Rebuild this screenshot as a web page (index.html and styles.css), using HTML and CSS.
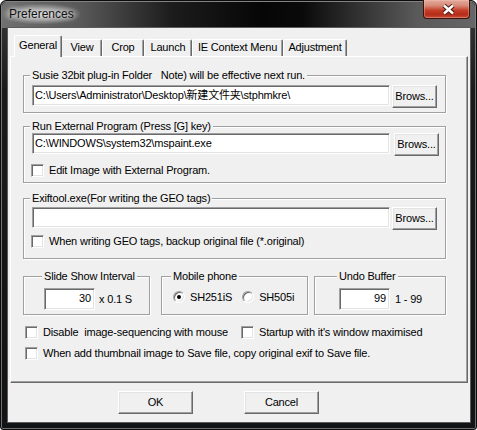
FILE: index.html
```html
<!DOCTYPE html>
<html>
<head>
<meta charset="utf-8">
<title>Preferences</title>
<link rel="stylesheet" href="styles.css">
</head>
<body>
<div class="window">
  <div class="titlebar">
    <span class="title">Preferences</span>
    <div class="close">
      <svg class="close-x" width="13" height="11" viewBox="0 0 13 11">
        <path d="M2 1.5 L11 9.5 M11 1.5 L2 9.5" stroke="#4a1510" stroke-width="4.4" fill="none"/>
        <path d="M2 1.5 L11 9.5 M11 1.5 L2 9.5" stroke="#ffffff" stroke-width="2.4" fill="none"/>
      </svg>
    </div>
  </div>
  <div class="client">
    <div class="tabs">
      <div class="tab sel w-general">General</div>
      <div class="tab w-view">View</div>
      <div class="tab w-crop">Crop</div>
      <div class="tab w-launch">Launch</div>
      <div class="tab w-ie">IE Context Menu</div>
      <div class="tab w-adj">Adjustment</div>
    </div>
    <div class="panel">
      <div class="group g1">
        <span class="group-title">Susie 32bit plug-in Folder   Note) will be effective next run.</span>
        <div class="field-row">
          <div class="edit path">C:\Users\Administrator\Desktop\新建文件夹\stphmkre\</div>
          <div class="btn browse">Brows...</div>
        </div>
      </div>
      <div class="group g2">
        <span class="group-title">Run External Program (Press [G] key)</span>
        <div class="field-row">
          <div class="edit path">C:\WINDOWS\system32\mspaint.exe</div>
          <div class="btn browse shift">Brows...</div>
        </div>
        <div class="check in-group"><span class="box"></span><span class="label">Edit Image with External Program.</span></div>
      </div>
      <div class="group g3">
        <span class="group-title">Exiftool.exe(For writing the GEO tags)</span>
        <div class="field-row">
          <div class="edit path"></div>
          <div class="btn browse">Brows...</div>
        </div>
        <div class="check in-group"><span class="box"></span><span class="label">When writing GEO tags, backup original file (*.original)</span></div>
      </div>
      <div class="group-row">
        <div class="group small slide">
          <span class="group-title">Slide Show Interval</span>
          <div class="small-row">
            <div class="edit num">30</div>
            <span class="unit">x 0.1 S</span>
          </div>
        </div>
        <div class="group small mobile">
          <span class="group-title">Mobile phone</span>
          <div class="small-row radios">
            <span class="radio on"></span><span class="label r1">SH251iS</span>
            <span class="radio"></span><span class="label">SH505i</span>
          </div>
        </div>
        <div class="group small undo">
          <span class="group-title">Undo Buffer</span>
          <div class="small-row">
            <div class="edit num">99</div>
            <span class="unit">1 - 99</span>
          </div>
        </div>
      </div>
      <div class="options">
        <div class="opt-row">
          <div class="check first"><span class="box"></span><span class="label">Disable  image-sequencing with mouse</span></div>
          <div class="check"><span class="box"></span><span class="label">Startup with it's window maximised</span></div>
        </div>
        <div class="opt-row second">
          <div class="check"><span class="box"></span><span class="label">When add thumbnail image to Save file, copy original exif to Save file.</span></div>
        </div>
      </div>
    </div>
    <div class="buttons">
      <div class="btn dlg">OK</div>
      <div class="btn dlg">Cancel</div>
    </div>
  </div>
</div>
</body>
</html>
```
FILE: styles.css
```css
* { box-sizing: border-box; }

body {
  margin: 0;
  background: #ffffff;
  font-family: "Liberation Sans", "Noto Sans CJK SC", Arial, sans-serif;
  font-size: 11px;
  line-height: 13px;
  letter-spacing: -0.18px;
  color: #000;
}

.window {
  width: 477px;
  height: 430px;
  border: 1px solid #0b0b0b;
  border-radius: 6px 6px 3px 3px;
  padding: 1px;
  background: linear-gradient(to bottom, #3a3a3a 0, #1a1a1a 90px, #121314 100%);
  box-shadow: inset 0 0 0 1px rgba(190, 190, 190, 0.55);
  display: flex;
  flex-direction: column;
}

.titlebar {
  height: 26px;
  flex: none;
  display: flex;
  align-items: flex-start;
  border-radius: 5px 5px 0 0;
  background: linear-gradient(to right, #707070 0, #585858 80px, #1c1c1c 170px, #060606 260px, #0a0a0a 300px, #343434 360px, #5a5a5a 415px, #666 100%);
}

.title {
  margin: 2px 0 0 1px;
  padding: 2px 6px;
  font-size: 12px;
  line-height: 16px;
  letter-spacing: 0;
  color: #111;
  background: radial-gradient(ellipse at center, rgba(235, 235, 235, 0.75) 0, rgba(210, 210, 210, 0.45) 45%, rgba(200, 200, 200, 0) 75%);
  text-shadow: 0 0 5px rgba(255, 255, 255, 0.9), 0 0 9px rgba(255, 255, 255, 0.6);
}

.close {
  margin: -2px 5px 0 auto;
  width: 47px;
  height: 19px;
  border: 1px solid #3d120c;
  border-top: none;
  border-radius: 0 0 4px 4px;
  background: linear-gradient(to bottom, #e2aa9c 0, #d88d7b 30%, #cb5a43 48%, #c23a24 60%, #b52d1a 82%, #c6503a 100%);
  box-shadow: inset 0 0 0 1px rgba(255, 200, 190, 0.35);
  display: flex;
  align-items: center;
  justify-content: center;
  padding-left: 4px;
}

.close-x { display: block; }

.client {
  flex: 1;
  margin: 0 5px 6px 6px;
  background: #f0f0f0;
  box-shadow: 0 0 0 1px #5c5c5c;
  display: flex;
  flex-direction: column;
}

/* Tabs */
.tabs {
  height: 28px;
  flex: none;
  display: flex;
  align-items: flex-end;
  padding-left: 6px;
}

.tab {
  height: 17px;
  border-top: 1px solid #fff;
  border-left: 1px solid #fff;
  border-right: 1px solid #696969;
  border-radius: 2px 2px 0 0;
  box-shadow: inset -1px 0 0 #a0a0a0;
  text-align: center;
  padding-top: 1px;
  white-space: nowrap;
  background: #f0f0f0;
}

.tab.sel {
  height: 22px;
  margin-bottom: -1px;
  margin-right: -2px;
  padding-top: 3px;
  position: relative;
  z-index: 1;
}

.w-general { width: 48px; }
.w-view { width: 42px; padding-left: 2px; }
.w-crop { width: 42px; }
.w-launch { width: 48px; }
.w-ie { width: 91px; }
.w-adj { width: 64px; }

/* Panel */
.panel {
  height: 327px;
  flex: none;
  margin: 0 2px;
  border: 1px solid;
  border-color: #fff #696969 #696969 #fff;
  box-shadow: inset -1px -1px 0 #a0a0a0;
  padding: 18px 0 0 12px;
}

.group {
  width: 423px;
  border: 1px solid #a0a0a0;
  box-shadow: 1px 1px 0 #fff, inset 1px 1px 0 #fff;
  padding: 0 8px;
}

.group-title {
  display: block;
  width: fit-content;
  margin: -7px 0 0 -2px;
  padding: 0 2px;
  background: #f0f0f0;
  white-space: pre;
}

.g1 { padding-bottom: 4px; }
.g1 .field-row { margin-top: 3px; }

.g2 { margin-top: 13px; padding-bottom: 5px; }
.g2 .check { margin-top: 8px; }

.g3 { margin-top: 15px; padding-bottom: 10px; }
.g3 .field-row { margin-top: 2px; }
.g3 .check { margin-top: 5px; }

.field-row {
  display: flex;
  align-items: flex-start;
  gap: 2px;
}

.edit {
  background: #fff;
  border: 1px solid;
  border-color: #a0a0a0 #fff #fff #a0a0a0;
  box-shadow: inset 1px 1px 0 #696969, inset -1px -1px 0 #e3e3e3;
  display: flex;
  align-items: center;
  white-space: nowrap;
  overflow: hidden;
}

.edit.path {
  width: 358px;
  height: 21px;
  padding: 0 2px 1px 2px;
}

.btn {
  background: #f0f0f0;
  border: 1px solid;
  border-color: #fff #696969 #696969 #fff;
  box-shadow: inset -1px -1px 0 #a0a0a0, inset 1px 1px 0 #e3e3e3;
  display: flex;
  align-items: center;
  justify-content: center;
  white-space: nowrap;
}

.browse {
  width: 45px;
  height: 23px;
  padding-bottom: 1px;
}

.browse.shift {
  margin-left: 2px;
  margin-right: -2px;
}

/* Checkboxes */
.check {
  display: flex;
  align-items: center;
  gap: 5px;
  height: 13px;
  white-space: pre;
}

.check.in-group { margin-left: -1px; }

.box {
  width: 13px;
  height: 13px;
  flex: none;
  background: #fff;
  border: 1px solid;
  border-color: #a0a0a0 #fff #fff #a0a0a0;
  box-shadow: inset 1px 1px 0 #696969, inset -1px -1px 0 #e3e3e3;
}

/* Row of small groups */
.group-row {
  display: flex;
  margin-top: 17px;
}

.group.small {
  padding-bottom: 4px;
}

.slide { width: 127px; padding-left: 20px; }
.mobile { width: 147px; margin-left: 11px; padding-left: 11px; }
.undo { width: 132px; margin-left: 6px; padding-left: 24px; }

.small-row {
  margin-top: 5px;
  height: 22px;
  display: flex;
  align-items: center;
}

.edit.num {
  width: 51px;
  height: 22px;
  justify-content: flex-end;
  padding: 0 3px 1px 2px;
}

.unit {
  margin: 1px 0 0 4px;
  white-space: nowrap;
}

.undo .unit { margin-left: 5px; }

.radios {
  padding-bottom: 4px;
}

.radio {
  width: 12px;
  height: 12px;
  flex: none;
  border-radius: 50%;
  background: #fff;
  border: 1px solid;
  border-color: #a0a0a0 #fff #fff #a0a0a0;
  box-shadow: inset 1px 1px 0 #696969, inset -1px -1px 0 #e3e3e3;
  display: flex;
  align-items: center;
  justify-content: center;
}

.radio.on::after {
  content: "";
  width: 4px;
  height: 4px;
  border-radius: 50%;
  background: #000;
}

.radios .label { margin-left: 5px; }
.radios .r1 { margin-right: 10px; }

/* Bottom options */
.options {
  margin-top: 11px;
  padding-left: 2px;
}

.opt-row { display: flex; }
.opt-row.second { margin-top: 8px; }
.check.first { width: 216px; flex: none; }

/* Dialog buttons */
.buttons {
  display: flex;
  gap: 51px;
  padding-left: 110px;
  margin-top: 8px;
}

.btn.dlg {
  width: 75px;
  height: 23px;
  padding-bottom: 1px;
}
```
